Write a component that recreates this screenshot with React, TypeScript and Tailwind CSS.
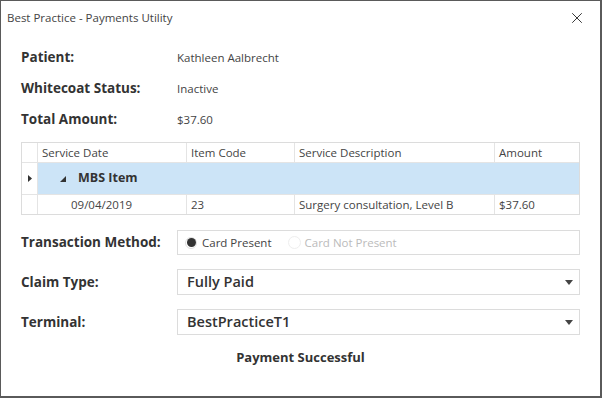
import { X } from 'lucide-react';

const font = { fontFamily: '"Open Sans", "Noto Sans", sans-serif' };

function Caret() {
  return (
    <svg width="8" height="5" viewBox="0 0 8 5" className="shrink-0">
      <path d="M0 0 L8 0 L4 5 Z" fill="#444" />
    </svg>
  );
}

export default function App() {
  const info = [
    { label: 'Patient:', value: 'Kathleen Aalbrecht' },
    { label: 'Whitecoat Status:', value: 'Inactive' },
    { label: 'Total Amount:', value: '$37.60' },
  ];

  return (
    <div
      className="w-[602px] h-[398px] bg-white text-[#333] border-l border-t border-r-2 border-b-2 border-[#5a5a5a] flex flex-col"
      style={font}
    >
      <div className="h-[34px] flex items-center justify-between pl-[6px] pr-[14px]">
        <span className="text-[11.5px] text-[#444]">Best Practice - Payments Utility</span>
        <X size={18} strokeWidth={1.3} className="text-[#333]" />
      </div>

      <div className="pl-[20px] pr-[20px] flex flex-col">
        <div className="flex flex-col gap-[10px] mt-[12px]">
          {info.map((row) => (
            <div key={row.label} className="flex items-center h-[21px]">
              <span className="w-[156px] text-[13.5px] font-bold text-[#333]">{row.label}</span>
              <span className="text-[11.5px] text-[#444]">{row.value}</span>
            </div>
          ))}
        </div>

        <div className="mt-[12px] w-[559px] border border-[#dcdcdc] text-[11.5px] text-[#444]">
          <div className="flex h-[20px] border-b border-[#e4e4e4]">
            <div className="w-[16px] border-r border-[#e4e4e4]" />
            <div className="w-[149px] border-r border-[#e4e4e4] pl-[4px] flex items-center">Service Date</div>
            <div className="w-[108px] border-r border-[#e4e4e4] pl-[4px] flex items-center">Item Code</div>
            <div className="w-[200px] border-r border-[#e4e4e4] pl-[4px] flex items-center">Service Description</div>
            <div className="flex-1 pl-[4px] flex items-center">Amount</div>
          </div>
          <div className="flex h-[32px] border-b border-[#e4e4e4]">
            <div className="w-[16px] border-r border-[#e4e4e4] flex items-center justify-center bg-white">
              <svg width="4" height="7" viewBox="0 0 4 7">
                <path d="M0 0 L4 3.5 L0 7 Z" fill="#333" />
              </svg>
            </div>
            <div className="flex-1 bg-[#cce4f7] flex items-center">
              <svg width="6" height="6" viewBox="0 0 6 6" className="ml-[22px]">
                <path d="M6 0 L6 6 L0 6 Z" fill="#333" />
              </svg>
              <span className="ml-[12px] text-[12.5px] font-bold text-[#333]">MBS Item</span>
            </div>
          </div>
          <div className="flex h-[19px]">
            <div className="w-[16px] border-r border-[#e4e4e4]" />
            <div className="w-[149px] border-r border-[#e4e4e4] pl-[33px] flex items-center">09/04/2019</div>
            <div className="w-[108px] border-r border-[#e4e4e4] pl-[4px] flex items-center">23</div>
            <div className="w-[200px] border-r border-[#e4e4e4] pl-[4px] flex items-center">Surgery consultation, Level B</div>
            <div className="flex-1 pl-[4px] flex items-center">$37.60</div>
          </div>
        </div>

        <div className="flex items-center mt-[15px]">
          <span className="w-[156px] text-[13.5px] font-bold text-[#333]">Transaction Method:</span>
          <div className="w-[403px] h-[25px] border border-[#dcdcdc] flex items-center pl-[7px] text-[11.5px]">
            <span className="w-[12px] h-[12px] rounded-full border border-[#e0e0e0] flex items-center justify-center">
              <span className="w-[9px] h-[9px] rounded-full bg-[#333]" />
            </span>
            <span className="ml-[5px] text-[#444]">Card Present</span>
            <span className="ml-[16px] w-[13px] h-[13px] rounded-full border border-[#eeeeee]" />
            <span className="ml-[4px] text-[#bbb]">Card Not Present</span>
          </div>
        </div>

        <div className="flex items-center mt-[14px]">
          <span className="w-[156px] text-[13.5px] font-bold text-[#333]">Claim Type:</span>
          <div className="w-[403px] h-[26px] border border-[#dcdcdc] flex items-center justify-between pl-[9px] pr-[6px]">
            <span className="text-[14.5px] font-semibold text-[#333]">Fully Paid</span>
            <Caret />
          </div>
        </div>

        <div className="flex items-center mt-[14px]">
          <span className="w-[156px] text-[13.5px] font-bold text-[#333]">Terminal:</span>
          <div className="w-[403px] h-[26px] border border-[#dcdcdc] flex items-center justify-between pl-[9px] pr-[6px]">
            <span className="text-[14.5px] font-semibold text-[#333]">BestPracticeT1</span>
            <Caret />
          </div>
        </div>

        <div className="mt-[13px] text-center text-[13px] font-bold text-[#333]">Payment Successful</div>
      </div>
    </div>
  );
}
